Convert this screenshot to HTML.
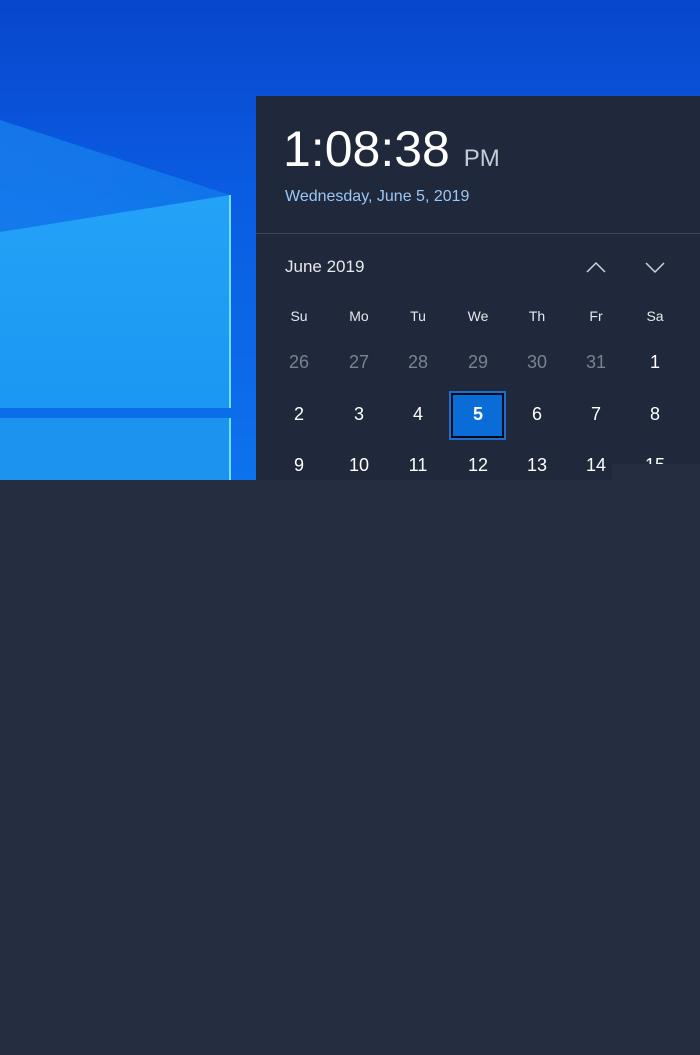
<!DOCTYPE html>
<html><head><style>
body{margin:0;width:700px;height:1055px;overflow:hidden;background:#252e41;font-family:"Liberation Sans",sans-serif;position:relative}
.wall{position:absolute;left:0;top:0;width:700px;height:480px;background:linear-gradient(180deg,#0846cc 0%,#0a5ce2 40%,#0d72ee 100%);overflow:hidden}
.panel{position:absolute;left:256px;top:96px;width:444px;height:384px;background:#1f293b;color:#fff}
.t{position:absolute;color:#fff;text-align:center}
.cut{position:absolute;left:612px;top:464px;width:88px;height:16px;background:#252e41}
</style></head><body>
<div class="wall">
<svg width="700" height="480" style="position:absolute;left:0;top:0">
<defs>
<linearGradient id="b" x1="0" y1="0" x2="1" y2="0"><stop offset="0" stop-color="#1a8cf2"/><stop offset="1" stop-color="#1e9cf8" stop-opacity=".6"/></linearGradient>
<linearGradient id="p" x1="0" y1="0" x2="0" y2="1"><stop offset="0" stop-color="#24a2f8"/><stop offset="1" stop-color="#1a98f2"/></linearGradient>
</defs>
<polygon points="0,120 230,195 0,232" fill="url(#b)" opacity=".6"/>
<polygon points="0,232 230,195 230,408 0,408" fill="url(#p)"/>
<line x1="230" y1="195" x2="230" y2="408" stroke="#6fe0ff" stroke-width="2"/>
<polygon points="0,418 230,418 230,480 0,480" fill="#1a94ef"/>
<line x1="230" y1="418" x2="230" y2="480" stroke="#6fe0ff" stroke-width="2"/>
</svg>
</div>
<div class="panel">
<div style="position:absolute;left:27px;top:24px;font-size:50px;font-weight:300;letter-spacing:0px">1:08:38 <span style="font-size:24px;color:#c6ccd6">PM</span></div>
<div style="position:absolute;left:29px;top:92px;font-size:16px;color:#9cc6f4">Wednesday, June 5, 2019</div>
<div style="position:absolute;left:0;top:137px;width:444px;height:1px;background:#3e4859"></div>
<div style="position:absolute;left:29px;top:161px;font-size:17px;color:#e6e8ec">June 2019</div>
<svg style="position:absolute;left:330px;top:164px" width="80" height="14"><path d="M1 12 L10 3 L19 12" fill="none" stroke="#d0d4da" stroke-width="1.5"/><path d="M60 3 L69 12 L78 3" fill="none" stroke="#d0d4da" stroke-width="1.5"/></svg>
<div style="position:absolute;left:193px;top:295px;width:53px;height:45px;border:2px solid #1a6fd0;"><div style="width:49px;height:41px;border:2px solid #050a14;background:#0a6cd6"></div></div>
</div>
<div id="g"></div>
<div class="cut"></div>
<script>
var xs=[299,359,418,478,537,596,655];
var rows=[[["Su","Mo","Tu","We","Th","Fr","Sa"],316,14,"#e6e8ec"],[["26","27","28","29","30","31","1"],363,18,"#7a828f"],[["2","3","4","5","6","7","8"],415,18,"#fff"],[["9","10","11","12","13","14","15"],466,18,"#fff"]];
var h="";
rows.forEach(function(r){r[0].forEach(function(s,i){var c=r[3];if(s=="1"&&r[1]==363)c="#fff";var b=(s=="5"&&r[1]==415)?"font-weight:bold;":"";
h+='<div class="t" style="left:'+(xs[i]-25)+'px;width:50px;top:'+(r[1]-r[2]*0.6)+'px;font-size:'+r[2]+'px;color:'+c+';'+b+'">'+s+'</div>';});});
document.getElementById("g").innerHTML=h;
</script>
</body></html>
